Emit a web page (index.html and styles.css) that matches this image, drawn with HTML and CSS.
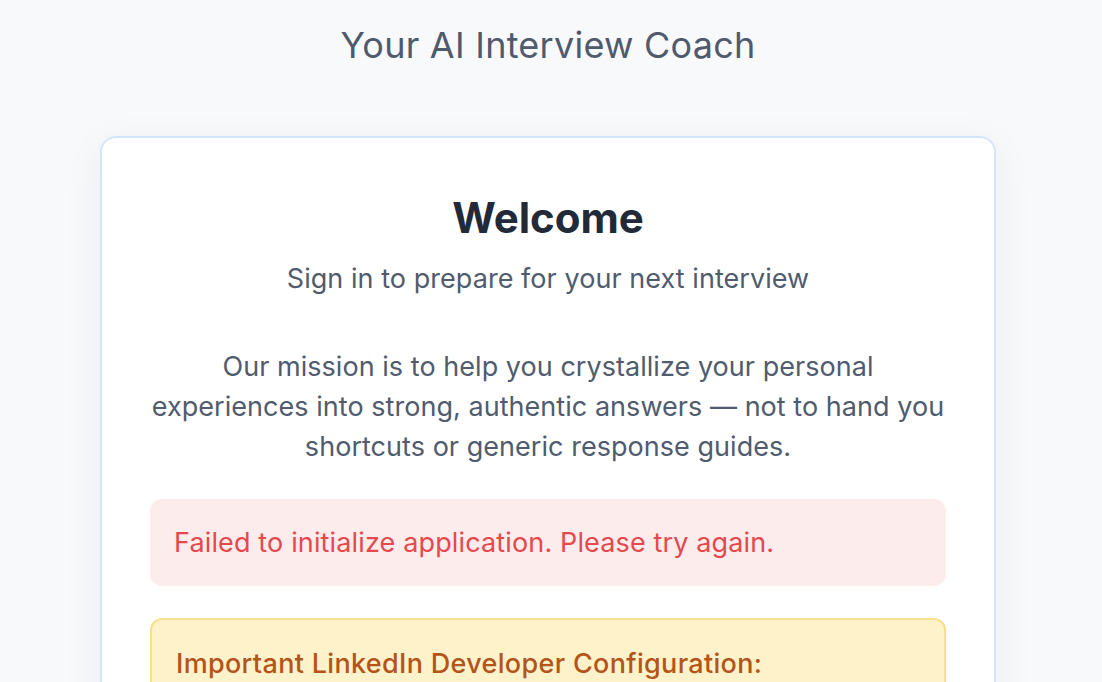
FILE: index.html
```html
<!DOCTYPE html>
<html lang="en">
<head>
<meta charset="utf-8">
<title>Your AI Interview Coach</title>
<link rel="stylesheet" href="styles.css">
</head>
<body>
<div class="page">
  <h1 class="app-title">Your AI Interview Coach</h1>
  <main class="card">
    <h2 class="welcome">Welcome</h2>
    <p class="subtitle">Sign in to prepare for your next interview</p>
    <p class="mission">Our mission is to help you crystallize your personal experiences into strong, authentic answers — not to hand you shortcuts or generic response guides.</p>
    <div class="alert-error">Failed to initialize application. Please try again.</div>
    <div class="alert-warning">
      <p class="warning-title">Important LinkedIn Developer Configuration:</p>
      <p class="warning-text">Make sure the redirect URL is registered in your LinkedIn app settings.</p>
    </div>
  </main>
</div>
</body>
</html>
```

FILE: styles.css
```css
* { box-sizing: border-box; }
html, body { margin: 0; padding: 0; }
body {
  background: #f8f9fb;
  font-family: Inter, "Noto Sans", "Liberation Sans", sans-serif;
  -webkit-font-smoothing: antialiased;
}
.page {
  display: flex;
  flex-direction: column;
  align-items: center;
  padding: 18px 6px 0 0;
}
.app-title {
  margin: 0;
  font-size: 36px;
  line-height: 54px;
  font-weight: 400;
  color: #4f5a6d;
  letter-spacing: 0.25px;
}
.card {
  margin-top: 64px;
  width: 896px;
  background: #ffffff;
  border: 2px solid #d3e5fb;
  border-radius: 16px;
  padding: 48px 48px 48px;
  box-shadow: 0 10px 40px rgba(30, 41, 59, 0.06);
  text-align: center;
}
.welcome {
  margin: 0;
  font-size: 42px;
  line-height: 64px;
  font-weight: 700;
  color: #222a3a;
  letter-spacing: 0;
}
.subtitle {
  margin: 9px 0 0;
  font-size: 27px;
  line-height: 40px;
  color: #505b6e;
  letter-spacing: 0.05px;
}
.mission {
  margin: 48px 0 0;
  font-size: 27px;
  line-height: 40px;
  color: #505b6e;
  letter-spacing: 0.04px;
}
.alert-error {
  margin-top: 32px;
  text-align: left;
  background: #fdecec;
  border-radius: 12px;
  padding: 24px 24px;
  font-size: 27px;
  line-height: 39px;
  color: #e5484d;
  letter-spacing: 0.14px;
}
.alert-warning {
  margin-top: 32px;
  text-align: left;
  background: #fef2cb;
  border: 2px solid #fbe08a;
  border-radius: 12px;
  padding: 24px 24px;
}
.warning-title {
  margin: 0;
  font-size: 27px;
  line-height: 40px;
  font-weight: 500;
  color: #b4541a;
  letter-spacing: 0.32px;
}
.warning-text {
  margin: 12px 0 0;
  font-size: 24px;
  line-height: 36px;
  color: #b4541a;
}
```
